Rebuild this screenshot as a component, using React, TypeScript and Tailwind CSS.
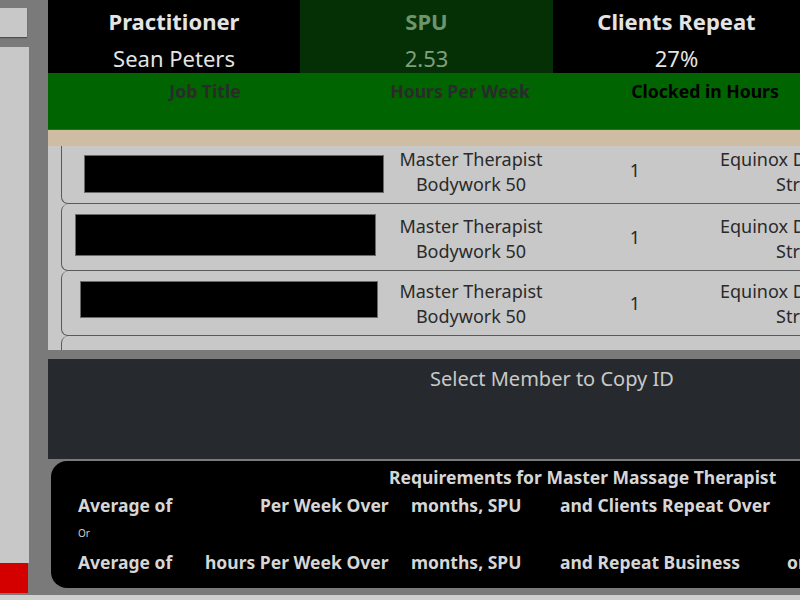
import React from "react";

const font = { fontFamily: '"Noto Sans", "Open Sans", sans-serif' };

type Row = { h: number; boxL: number; boxT: number; boxW: number; boxH: number; pt: number };

const rows: Row[] = [
  { h: 67, boxL: 22, boxT: 18, boxW: 300, boxH: 38, pt: 10 },
  { h: 67, boxL: 13, boxT: 10, boxW: 301, boxH: 42, pt: 10 },
  { h: 65, boxL: 18, boxT: 10, boxW: 298, boxH: 37, pt: 8 },
  { h: 65, boxL: 18, boxT: 18, boxW: 298, boxH: 37, pt: 9 },
];

function ListRow({ r }: { r: Row }) {
  return (
    <div
      className="flex border-l border-b border-[#5a5a5a] rounded-l-[7px] text-[#2a2a2a] text-[18px] shrink-0"
      style={{ height: r.h }}
    >
      <div className="w-[330px] shrink-0">
        <div
          className="bg-black border border-[#6a6a6a]"
          style={{ marginLeft: r.boxL, marginTop: r.boxT, width: r.boxW, height: r.boxH }}
        />
      </div>
      <div className="w-[158px] shrink-0 text-center leading-[25px] whitespace-nowrap" style={{ paddingTop: r.pt }}>
        <div>Master Therapist</div>
        <div>Bodywork 50</div>
      </div>
      <div className="w-[170px] shrink-0 flex items-center justify-center">1</div>
      <div className="w-[260px] shrink-0 leading-[25px] whitespace-nowrap" style={{ paddingTop: r.pt }}>
        <div>Equinox Downtown</div>
        <div className="pl-[56px]">Street</div>
      </div>
    </div>
  );
}

export default function App() {
  return (
    <div className="w-[800px] h-[600px] bg-[#cfcfcf] overflow-hidden" style={font}>
      <div className="h-[595px] bg-[#7a7a7a] flex">
        <aside className="w-[48px] shrink-0 flex flex-col">
          <div className="mt-[8px] w-[27px] h-[29px] bg-[#c8c8c8] shadow-[0_1px_1px_rgba(0,0,0,0.35)]" />
          <div className="mt-[10px] w-[29px] flex-1 bg-[#c8c8c8]" />
          <div className="w-[28px] h-[30px] bg-[#d40000] mb-[2px]" />
        </aside>
        <main className="flex-1 flex flex-col overflow-hidden">
          {/* header */}
          <div className="h-[73px] flex bg-black shrink-0">
            <div className="w-[252px] flex flex-col items-center pt-[6px] text-[#e4e4e4]">
              <div className="text-[22px] leading-[30px] font-bold">Practitioner</div>
              <div className="text-[22px] leading-[30px] mt-[7px]">Sean Peters</div>
            </div>
            <div className="w-[253px] flex flex-col items-center pt-[6px] bg-[#053005]">
              <div className="text-[22px] leading-[30px] font-bold text-[#6c956c]">SPU</div>
              <div className="text-[22px] leading-[30px] mt-[7px] text-[#7e9f7e]">2.53</div>
            </div>
            <div className="flex-1 flex flex-col items-center pt-[6px] text-[#e4e4e4]">
              <div className="text-[22px] leading-[30px] font-bold">Clients Repeat</div>
              <div className="text-[22px] leading-[30px] mt-[7px]">27%</div>
            </div>
          </div>
          {/* green column bar */}
          <div className="h-[57px] bg-[#006400] border-b border-[#3f5d2e] flex pt-[6px] text-[17.6px] leading-[24px] font-bold whitespace-nowrap shrink-0">
            <div className="w-[314px] shrink-0 text-center text-[#2b2b2b]">Job Title</div>
            <div className="w-[196px] shrink-0 text-center text-[#2b2b2b]">Hours Per Week</div>
            <div className="w-[294px] shrink-0 text-center text-black">Clocked in Hours</div>
          </div>
          <div className="h-[16px] bg-[#cebca3] shrink-0" />
          {/* list */}
          <div className="h-[204px] bg-[#c8c8c8] pl-[13px] overflow-hidden shrink-0">
            <div className="-mt-[9px] flex flex-col">
              {rows.map((r, i) => (
                <ListRow key={i} r={r} />
              ))}
            </div>
          </div>
          <div className="h-[9px] shrink-0" />
          {/* member panel */}
          <div className="h-[100px] bg-[#262a2e] shrink-0 pl-[382px] pt-[7px] text-[20px] leading-[26px] text-[#c9c9c9] whitespace-nowrap">
            Select Member to Copy ID
          </div>
          <div className="h-[2px] shrink-0" />
          {/* requirements */}
          <div className="h-[127px] ml-[3px] bg-black rounded-l-[16px] shrink-0 text-[#d6d6d6] font-bold text-[17.5px] whitespace-nowrap overflow-hidden">
            <div className="pt-[4px] leading-[24px] pl-[338px]">Requirements for Master Massage Therapist</div>
            <div className="mt-[4px] leading-[24px] pl-[27px] flex">
              <span className="w-[182px] shrink-0">Average of</span>
              <span className="w-[151px] shrink-0">Per Week Over</span>
              <span className="w-[149px] shrink-0">months, SPU</span>
              <span className="shrink-0">and Clients Repeat Over</span>
            </div>
            <div className="mt-[9px] leading-[14px] pl-[27px] text-[10px] font-normal text-[#cfcfcf]">Or</div>
            <div className="mt-[10px] leading-[24px] pl-[27px] flex">
              <span className="w-[127px] shrink-0">Average of</span>
              <span className="w-[206px] shrink-0">hours Per Week Over</span>
              <span className="w-[149px] shrink-0">months, SPU</span>
              <span className="w-[227px] shrink-0">and Repeat Business</span>
              <span className="shrink-0">or</span>
            </div>
          </div>
        </main>
      </div>
    </div>
  );
}
